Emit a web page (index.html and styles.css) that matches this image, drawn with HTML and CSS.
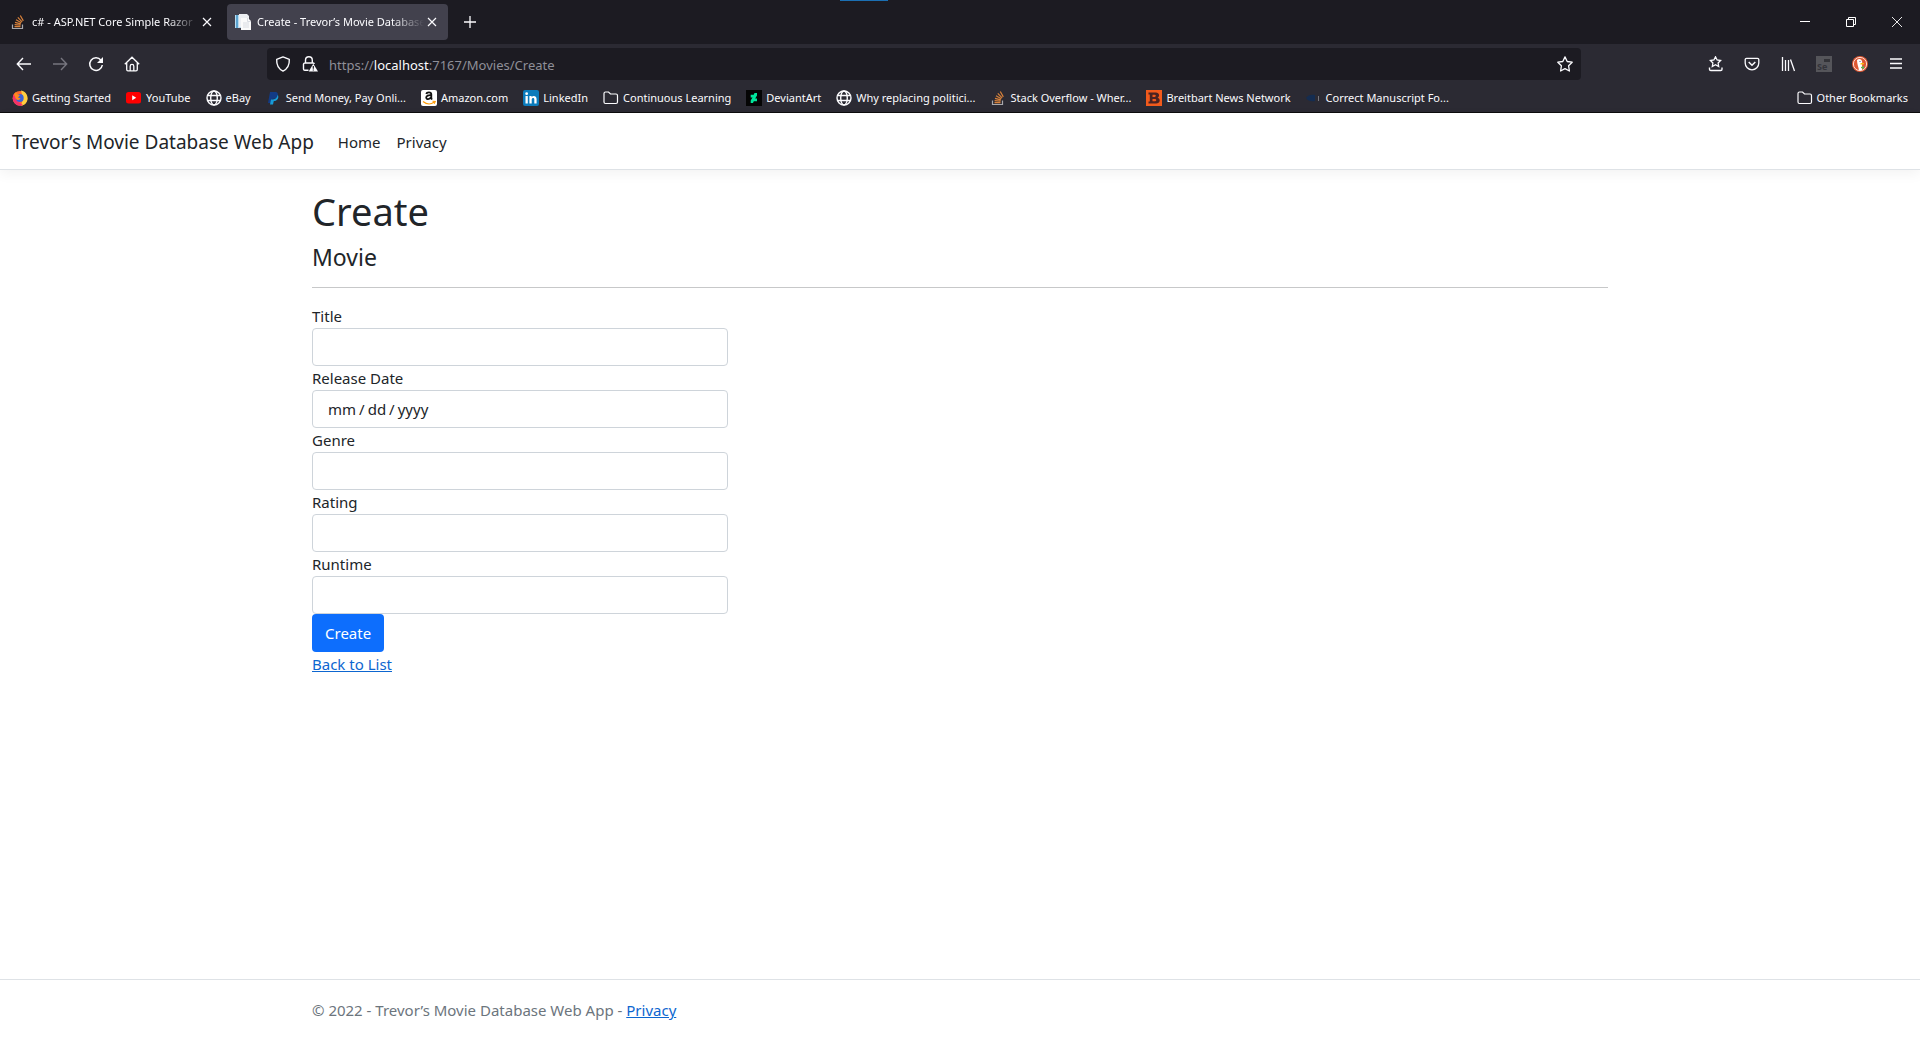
FILE: index.html
```html
<!DOCTYPE html>
<html lang="en">
<head>
<meta charset="utf-8">
<meta name="viewport" content="width=device-width, initial-scale=1">
<title>Create - Trevor’s Movie Database Web App</title>
<link rel="stylesheet" href="styles.css">
</head>
<body>
<svg class="sprite" aria-hidden="true">
  <symbol id="stack" viewBox="0 0 16 16"><path d="M2.500 10.500v4h10v-4" fill="none" stroke="#a8a8ac" stroke-width="1.200"/><path d="M4.500 12.700h6M4.600 10.600l6 .6M5 8.300l5.800 1.600M6 5.800l5.300 3M7.800 3.400l4.300 4.400M10.300 1.500l3 5.400" fill="none" stroke="#d9823b" stroke-width="1.200"/></symbol>
  <symbol id="globe" viewBox="0 0 16 16"><g fill="none" stroke="#fbfbfe" stroke-width="1.400"><circle cx="8" cy="8" r="7"/><ellipse cx="8" cy="8" rx="3.300" ry="7"/><path d="M1.500 5.500h13M1.500 10.500h13"/></g></symbol>
  <symbol id="folder" viewBox="0 0 16 16"><path d="M1 12V3.500a1.500 1.500 0 0 1 1.500-1.500h3l2 2h5.500a1.500 1.500 0 0 1 1.500 1.500V12a1.500 1.500 0 0 1-1.500 1.500H2.500A1.500 1.500 0 0 1 1 12z" fill="none" stroke="#fbfbfe" stroke-width="1.200"/></symbol>
  <symbol id="close" viewBox="0 0 16 16"><path d="M4 4l8 8M12 4l-8 8" stroke="#fbfbfe" stroke-width="1.200"/></symbol>
</svg>

<header class="browser">
  <div class="tabs">
    <div class="tab">
      <svg class="icon"><use href="#stack"/></svg>
      <span class="tab-title">c# - ASP.NET Core Simple Razor</span>
      <button class="tab-close" type="button" aria-label="Close tab"><svg class="icon"><use href="#close"/></svg></button>
    </div>
    <div class="tab tab-active">
      <svg class="icon" viewBox="0 0 16 16"><path d="M0 1h7v13H0z" fill="#b9dcf0"/><path d="M1 1h2v13H1z" fill="#5ca3cf"/><path d="M4 0h8l2 2v11H4z" fill="#eceef2"/><path d="M6 4h7l3 3v9H6z" fill="#fafafa"/><path d="M12.500 4v3.500H16M8 9h6M8 11h6M8 13h6" fill="none" stroke="#cfd3da" stroke-width=".8"/></svg>
      <span class="tab-title">Create - Trevor’s Movie Database</span>
      <button class="tab-close" type="button" aria-label="Close tab"><svg class="icon"><use href="#close"/></svg></button>
    </div>
    <button class="new-tab" type="button" aria-label="New tab"><svg class="icon" viewBox="0 0 16 16"><path d="M8 2v12M2 8h12" stroke="#fbfbfe" stroke-width="1.300"/></svg></button>
    <span class="accent"></span>
    <div class="window-buttons">
      <button type="button" aria-label="Minimize"><svg class="icon" viewBox="0 0 16 16"><path d="M3 7.500h10" stroke="#fff"/></svg></button>
      <button type="button" aria-label="Restore"><svg class="icon" viewBox="0 0 16 16"><path d="M3.500 5.500h7v7h-7zM5.500 5V3.500h7v7H11" fill="none" stroke="#fff"/></svg></button>
      <button type="button" aria-label="Close"><svg class="icon" viewBox="0 0 16 16"><path d="M3 3l10 10M13 3L3 13" stroke="#fff" stroke-width=".9"/></svg></button>
    </div>
  </div>

  <div class="toolbar">
    <div class="tools">
      <button type="button" aria-label="Back"><svg class="icon" viewBox="0 0 16 16"><path d="M15 8H1.500M7 2L1.300 8 7 14" fill="none" stroke="#fbfbfe" stroke-width="1.400"/></svg></button>
      <button type="button" aria-label="Forward" disabled><svg class="icon" viewBox="0 0 16 16"><path d="M1 8h13.500M9 2l5.700 6L9 14" fill="none" stroke="#77767f" stroke-width="1.400"/></svg></button>
      <button type="button" aria-label="Reload"><svg class="icon" viewBox="0 0 16 16"><path d="M13 4.200A6.300 6.300 0 1 0 14.300 9" fill="none" stroke="#fbfbfe" stroke-width="1.500"/><path d="M15 1v6H9z" fill="#fbfbfe"/></svg></button>
      <button type="button" aria-label="Home"><svg class="icon" viewBox="0 0 16 16"><path d="M.8 8.300L8 1.200l7.200 7.100M2.700 7v6.500A1.300 1.300 0 0 0 4 14.800h8a1.300 1.300 0 0 0 1.300-1.300V7M6.200 14.500v-4.300a1.800 1.800 0 0 1 3.600 0v4.300" fill="none" stroke="#fbfbfe" stroke-width="1.300"/></svg></button>
    </div>
    <div class="urlbar">
      <svg class="icon" viewBox="0 0 16 16"><path d="M8 .9l6.300 2.500c.3 5-1.400 9.300-6.300 11.700C3.100 12.700 1.400 8.400 1.700 3.400z" fill="none" stroke="#fbfbfe" stroke-width="1.400" stroke-linejoin="round"/></svg>
      <svg class="icon" viewBox="0 0 16 16"><path d="M6.500 14.200H2.800A1.300 1.300 0 0 1 1.500 13V8.300A1.300 1.300 0 0 1 2.800 7h8.400c.7 0 1 .4 1 1M3.500 7V4.200a3.400 3.400 0 0 1 6.800 0V7" fill="none" stroke="#fbfbfe" stroke-width="1.400"/><path d="M11.300 7.700L16 15.600H6.700z" fill="#fbfbfe"/><path d="M11.300 10v2.800M11.300 13.500v1" stroke="#1c1b22" stroke-width="1.200"/></svg>
      <span class="url">https://<b>localhost</b>:7167/Movies/Create</span>
      <svg class="icon" viewBox="0 0 16 16"><path d="M8 .9l2.200 4.600 5 .7-3.600 3.600.8 5.200L8 12.600 3.600 15l.8-5.200L.8 6.200l5-.7z" fill="none" stroke="#fbfbfe" stroke-width="1.300" stroke-linejoin="round"/></svg>
    </div>
    <div class="tools">
      <button type="button" aria-label="Bookmarks menu"><svg class="icon" viewBox="0 0 16 16"><path d="M7.500 .8l1.600 3.200 3.500.5-2.500 2.500.6 3.500-3.200-1.700-3.200 1.700.6-3.500-2.500-2.500 3.500-.5z" fill="none" stroke="#fbfbfe" stroke-width="1.300"/><path d="M1.500 11.500v1.700c0 .8.500 1.300 1.300 1.300h9.900c.8 0 1.300-.5 1.300-1.300v-1.700" fill="none" stroke="#fbfbfe" stroke-width="1.400"/></svg></button>
      <button type="button" aria-label="Save to Pocket"><svg class="icon" viewBox="0 0 16 16"><path d="M2.500 2.300h11a1.300 1.300 0 0 1 1.300 1.300V7A6.800 6.800 0 0 1 1.200 7V3.600a1.300 1.300 0 0 1 1.300-1.300z" fill="none" stroke="#fbfbfe" stroke-width="1.300"/><path d="M4.700 6L8 9.200 11.300 6" fill="none" stroke="#fbfbfe" stroke-width="1.500"/></svg></button>
      <button type="button" aria-label="Library"><svg class="icon" viewBox="0 0 16 16"><path d="M2.500 1v14M5.500 4v11M8.500 4v11M10.500 3.500L14.500 15" fill="none" stroke="#fbfbfe" stroke-width="1.300"/></svg></button>
      <button type="button" aria-label="Selenium"><svg class="icon" viewBox="0 0 16 16"><path d="M0 0h16v16H0z" fill="#55555a"/><path d="M8 3h6v3H8z" fill="#333338"/><text x="1" y="14" class="se">Se</text></svg></button>
      <button type="button" aria-label="DuckDuckGo"><svg class="icon" viewBox="0 0 16 16"><circle cx="8" cy="8" r="8" fill="#de5833"/><circle cx="8" cy="8" r="6.600" fill="none" stroke="#fff" stroke-width=".8"/><path d="M5 4c2-2 5-.8 5.200 2L10 14l-3 .3C6.500 11 5 8 5 4z" fill="#fff"/><path d="M8.500 7.200c2-.4 3.500-.4 3.800.2-.5 1-2.500 1.300-3.800 1.100z" fill="#fdb90f"/><path d="M9 11l3-1v3l-3-1z" fill="#5ab552"/><circle cx="8" cy="5.500" r=".6" fill="#2d4f8e"/></svg></button>
      <button type="button" aria-label="Menu"><svg class="icon" viewBox="0 0 16 16"><path d="M2 3h12M2 7.500h12M2 12h12" stroke="#fbfbfe" stroke-width="1.400"/></svg></button>
    </div>
  </div>

  <nav class="bookmarks" aria-label="Bookmarks">
    <a href="#"><svg class="icon" viewBox="0 0 16 16"><circle cx="8" cy="8.300" r="7.400" fill="#ff6a2b"/><path d="M9 .5c5 1 7 5 6.500 9-.4 3-3 6-6.500 6.200l2-7z" fill="#ffcf3f"/><path d="M1.500 4C0 8 1 12.500 4.500 14.700c2 1.200 4.500 1.300 6.500.3L5 11z" fill="#f5316b"/><circle cx="7.800" cy="8" r="3.900" fill="#3b62d8"/><path d="M2 4l2-2 1.500 2.300L8 5 6 7.500l2.500 1C7.800 10 5.500 10.500 4 9z" fill="#ff8a1f"/></svg>Getting Started</a>
    <a href="#"><svg class="icon" viewBox="0 0 16 16"><rect x="0" y="2" width="15" height="11.500" rx="2.500" fill="#f00"/><path d="M6.200 5.200l4 2.500-4 2.500z" fill="#fff"/></svg>YouTube</a>
    <a href="#"><svg class="icon"><use href="#globe"/></svg>eBay</a>
    <a href="#"><svg class="icon" viewBox="0 0 16 16"><path d="M4 2h5c2.800 0 3.500 2 2.500 4.300C10.500 8.500 8.500 9 6 9l-.8 4H2z" fill="#123b85"/><path d="M11.800 4.700c1.500 3-.3 6.300-4 6.300l-.8 3.500H4l1-5c3.500.4 5.800-1 6.800-4.800z" fill="#179bd7"/></svg>Send Money, Pay Onli...</a>
    <a href="#"><svg class="icon" viewBox="0 0 16 16"><rect width="16" height="16" rx="2" fill="#fff"/><path d="M5.300 4c.4-2.200 5-2.500 5 .3v4.200l.8 1M10 5.200C7.500 5 5.200 5.600 5.200 7.600c0 2.200 3.600 2.200 4.800-.4" fill="none" stroke="#111" stroke-width="1.800"/><path d="M2 11.500c3.500 2.800 8 2.800 11 .8M11.500 11.300l2.700.1-1 2.300" fill="none" stroke="#f90" stroke-width="1.100"/></svg>Amazon.com</a>
    <a href="#"><svg class="icon" viewBox="0 0 16 16"><rect width="16" height="16" rx="2" fill="#0b7bbb"/><path d="M2.500 6h2.300v7.500H2.500zM6.400 6h2.200v1C10 5.200 13.600 5.500 13.600 9v4.500h-2.300V9.300c0-2-2.600-1.800-2.600.2v4H6.400z" fill="#fff"/><circle cx="3.650" cy="3.700" r="1.400" fill="#fff"/></svg>LinkedIn</a>
    <a href="#"><svg class="icon"><use href="#folder"/></svg>Continuous Learning</a>
    <a href="#"><svg class="icon" viewBox="0 0 16 16"><path d="M0 0h16v16H0z" fill="#050505"/><path d="M8.500 3H11v2.500L9.200 8.500H11v2.800H7.800L7 13H4.700v-2.500l1.800-3H4.700V4.800h3z" fill="#00e59b"/></svg>DeviantArt</a>
    <a href="#"><svg class="icon"><use href="#globe"/></svg>Why replacing politici...</a>
    <a href="#"><svg class="icon"><use href="#stack"/></svg>Stack Overflow - Wher...</a>
    <a href="#"><svg class="icon" viewBox="0 0 16 16"><path d="M0 0h16v16H0z" fill="#f15a1c"/><path d="M2.500 2.500h7.300c4 0 4 4.300 1.800 5.200 3.200 1 2.800 5.800-1.500 5.800H2.500v-2h1.300v-7H2.500zM6.500 4.700v2.200h2.200c1.500 0 1.500-2.200 0-2.200zM6.500 9v2.300H9c1.700 0 1.700-2.300 0-2.300z" fill="#4a2322" fill-rule="evenodd"/></svg>Breitbart News Network</a>
    <a href="#"><svg class="icon" viewBox="0 0 16 16"><path d="M0 8c2-3 5-3.500 9-3v6c-4 .6-7 0-9-3z" fill="#142c50"/><path d="M12.500 6v5" stroke="#77777d"/></svg>Correct Manuscript Fo...</a>
    <a class="other" href="#"><svg class="icon"><use href="#folder"/></svg>Other Bookmarks</a>
  </nav>
</header>

<header class="navbar">
  <a class="brand" href="#">Trevor’s Movie Database Web App</a>
  <nav class="nav-links">
    <a href="#">Home</a>
    <a href="#">Privacy</a>
  </nav>
</header>

<main class="container">
  <h1>Create</h1>
  <h4>Movie</h4>
  <hr>
  <form class="movie-form">
    <label for="title">Title</label>
    <input class="field" id="title" type="text">
    <label for="release">Release Date</label>
    <input class="field" id="release" type="date">
    <label for="genre">Genre</label>
    <input class="field" id="genre" type="text">
    <label for="rating">Rating</label>
    <input class="field" id="rating" type="text">
    <label for="runtime">Runtime</label>
    <input class="field" id="runtime" type="text">
    <button class="submit" type="submit">Create</button>
  </form>
  <a class="link" href="#">Back to List</a>
</main>

<footer class="footer">
  <div class="container">© 2022 - Trevor’s Movie Database Web App - <a class="link" href="#">Privacy</a></div>
</footer>
</body>
</html>
```
FILE: styles.css
```css
* { box-sizing: border-box; }

body {
  margin: 0;
  min-height: 100vh;
  display: flex;
  flex-direction: column;
  background: #fff;
  color: #212529;
  font: 15px/24px "Noto Sans", "Open Sans", sans-serif;
}

.sprite { position: absolute; width: 0; height: 0; }
.icon { width: 16px; height: 16px; flex: none; display: block; }
a { color: inherit; text-decoration: none; }

/* Browser window */
.browser {
  background: #2b2a33;
  border-bottom: 1px solid #0c0c0d;
  color: #fbfbfe;
  font-size: 11px;
  line-height: 16px;
}
.browser button {
  display: flex;
  align-items: center;
  justify-content: center;
  padding: 0;
  border: 0;
  background: none;
}

.tabs {
  position: relative;
  display: flex;
  align-items: center;
  gap: 4px;
  height: 44px;
  padding-left: 2px;
  background: #1c1b22;
}
.tab {
  display: flex;
  align-items: center;
  gap: 6px;
  width: 221px;
  height: 36px;
  padding: 0 8px;
  border-radius: 4px;
}
.tab-active { background: #42414d; }
.tab-title {
  flex: 1;
  overflow: hidden;
  white-space: nowrap;
  mask-image: linear-gradient(to left, transparent, #000 32px);
}
.tab-close { width: 16px; height: 24px; margin-left: -6px; }
.new-tab { width: 36px; height: 36px; }
.accent {
  position: absolute;
  top: 0;
  left: 840px;
  width: 48px;
  height: 1px;
  background: #1b6fb3;
}
.window-buttons { display: flex; margin-left: auto; }
.window-buttons button { width: 46px; height: 44px; }

.toolbar {
  display: flex;
  align-items: center;
  padding: 4px 6px;
}
.tools { display: flex; }
.tools button { width: 36px; height: 32px; }
.se { font: bold 9px "Open Sans", sans-serif; fill: #34343a; }
.urlbar {
  flex: 1;
  display: flex;
  align-items: center;
  gap: 11px;
  height: 32px;
  margin: 0 117px;
  padding: 0 8px;
  border-radius: 4px;
  background: #1c1b22;
}
.url { flex: 1; padding-top: 2px; font-size: 13px; color: #8f8f98; }
.url b { font-weight: 400; color: #fbfbfe; }

.bookmarks {
  display: flex;
  align-items: center;
  gap: 15px;
  height: 28px;
  padding: 0 12px;
  white-space: nowrap;
}
.bookmarks a { display: flex; align-items: center; gap: 4px; }
.bookmarks .other { margin-left: auto; }

/* Web page */
.navbar {
  display: flex;
  align-items: center;
  gap: 16px;
  height: 57px;
  padding: 2px 12px 0;
  margin-bottom: 16px;
  border-bottom: 1px solid #dee2e6;
  box-shadow: 0 4px 12px rgba(0, 0, 0, .05);
}
.brand { font-size: 19px; }
.nav-links { display: flex; }
.nav-links a { padding: 0 8px; }

.container {
  width: 100%;
  max-width: 1320px;
  margin: 0 auto;
  padding: 0 12px;
}
h1 { margin: 0 0 6px; font-size: 38px; line-height: 50px; font-weight: 400; }
h4 { margin: 0; font-size: 23px; line-height: 31px; font-weight: 400; }
hr { height: 1px; margin: 14px 0 16px; border: 0; background: #c7c8c9; }

.movie-form {
  display: flex;
  flex-direction: column;
  width: 33%;
  min-width: 320px;
  max-width: 416px;
}
.field {
  width: 100%;
  height: 38px;
  padding: 6px 12px;
  border: 1px solid #ced4da;
  border-radius: 4px;
  background: #fff;
  color: #212529;
  font: inherit;
}
.field::-webkit-calendar-picker-indicator { display: none; }
.field::-webkit-datetime-edit { padding: 0 2px; }
.field::-webkit-datetime-edit-text { padding: 0 2px; }
.submit {
  align-self: flex-start;
  height: 38px;
  padding: 0 13px;
  border: 0;
  border-radius: 4px;
  background: #0d6efd;
  color: #fff;
  font: inherit;
}
.link { color: #0d66d0; text-decoration: underline; }

.footer {
  margin-top: auto;
  border-top: 1px solid #dee2e6;
  color: #6c757d;
  line-height: 60px;
}
```
